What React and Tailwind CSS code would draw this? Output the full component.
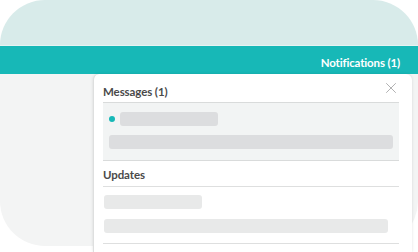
import { X } from 'lucide-react'

const font = { fontFamily: 'Lato, "Noto Sans", sans-serif' }

function Bar({ className }) {
  return <div className={`h-[14px] rounded-[3px] ${className}`} />
}

export default function App() {
  return (
    <div className="w-[418px] h-[252px] bg-white" style={font}>
      <div className="h-[46px] rounded-t-[45px] bg-[#d8ebea] border-b border-[#e6f3f2]" />
      <div className="h-[32px] bg-[#17b8b7] flex items-center justify-end pr-[18px]">
        <span className="text-white font-bold text-[11.5px] tracking-[-0.15px] pt-[1px]">Notifications (1)</span>
      </div>
      <div className="h-[172px] bg-[#f3f4f4] rounded-b-[45px] pl-[93px] pr-[6px]">
        <div className="-mt-[4px] h-[178px] bg-white rounded-t-[6px] border-l border-[#dedfdf] shadow-[0_0_3px_rgba(0,0,0,0.12)] pl-[9px] pr-[13px]">
          <div className="h-[28px] flex items-center justify-between">
            <span className="text-[11.5px] font-bold text-[#4a4a4a] tracking-[-0.1px] pt-[7px]">Messages (1)</span>
            <X size={18} strokeWidth={0.9} className="text-[#8a8b8c] -mr-[1px]" />
          </div>
          <div className="bg-[#f2f4f4] border-y border-[#d9dbdb] pt-[9px] pb-[11px] px-[6px] flex flex-col gap-[9px]">
            <div className="flex items-center gap-[5px]">
              <span className="w-[6px] h-[6px] rounded-full bg-[#17b8b7]" />
              <Bar className="w-[98px] h-[13px] bg-[#dcdddf]" />
            </div>
            <Bar className="w-full bg-[#dcdddf]" />
          </div>
          <div className="h-[26px] flex items-center border-b border-[#dedfdf]">
            <span className="text-[11.5px] font-bold text-[#4a4a4a] tracking-[-0.1px] pt-[3px]">Updates</span>
          </div>
          <div className="pt-[8px] pb-[10px] pl-[1px] pr-[11px] flex flex-col gap-[10px] border-b border-[#dedfdf]">
            <Bar className="w-[98px] bg-[#e8e9e9]" />
            <Bar className="w-full bg-[#e8e9e9]" />
          </div>
        </div>
      </div>
    </div>
  )
}
